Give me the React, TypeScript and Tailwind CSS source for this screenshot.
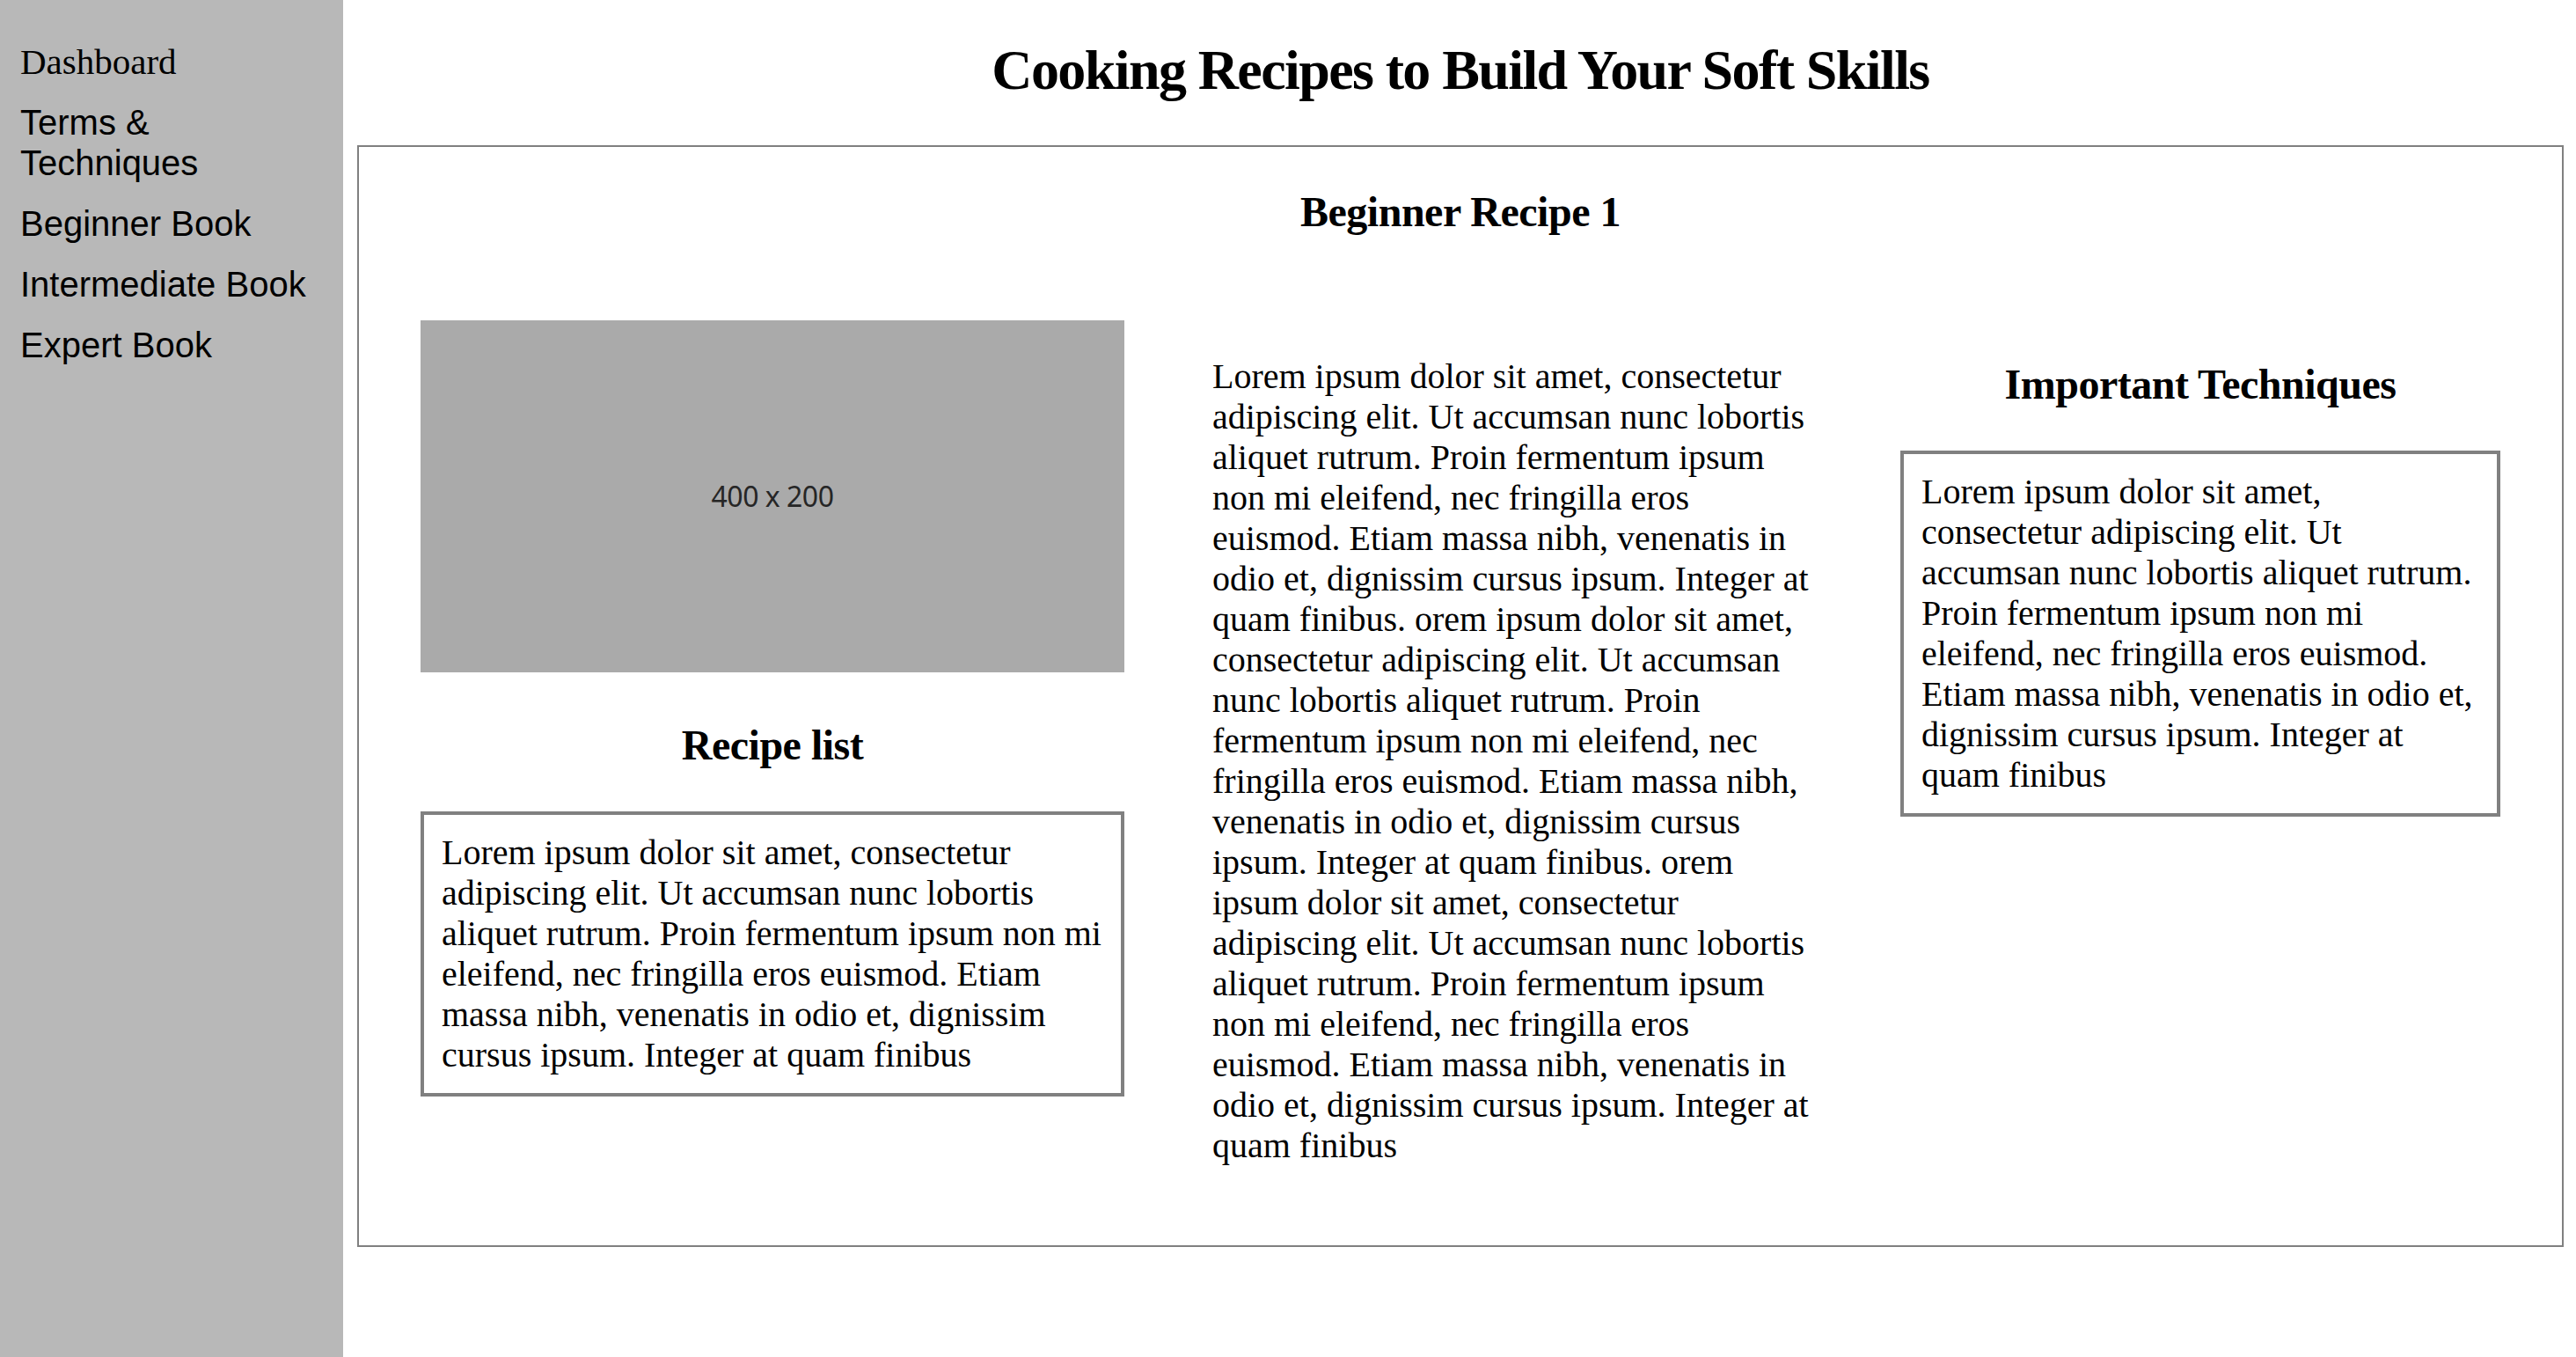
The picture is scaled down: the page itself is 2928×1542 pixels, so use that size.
import React from "react";

const LOREM =
  "Lorem ipsum dolor sit amet, consectetur adipiscing elit. Ut accumsan nunc lobortis aliquet rutrum. Proin fermentum ipsum non mi eleifend, nec fringilla eros euismod. Etiam massa nibh, venenatis in odio et, dignissim cursus ipsum. Integer at quam finibus";

const MIDDLE =
  "Lorem ipsum dolor sit amet, consectetur adipiscing elit. Ut accumsan nunc lobortis aliquet rutrum. Proin fermentum ipsum non mi eleifend, nec fringilla eros euismod. Etiam massa nibh, venenatis in odio et, dignissim cursus ipsum. Integer at quam finibus. orem ipsum dolor sit amet, consectetur adipiscing elit. Ut accumsan nunc lobortis aliquet rutrum. Proin fermentum ipsum non mi eleifend, nec fringilla eros euismod. Etiam massa nibh, venenatis in odio et, dignissim cursus ipsum. Integer at quam finibus. orem ipsum dolor sit amet, consectetur adipiscing elit. Ut accumsan nunc lobortis aliquet rutrum. Proin fermentum ipsum non mi eleifend, nec fringilla eros euismod. Etiam massa nibh, venenatis in odio et, dignissim cursus ipsum. Integer at quam finibus";

export default function App() {
  return (
    <div className="flex min-h-[1542px] w-full bg-white text-black font-['Liberation_Serif','Times_New_Roman',serif]">
      <nav className="w-[390px] shrink-0 bg-[#b8b8b8] px-[23px] pt-[47px] flex flex-col gap-[23px] text-[40px] leading-[46px]">
        <a className="font-['Liberation_Serif','Times_New_Roman',serif] text-[41px]">Dashboard</a>
        <a className="font-['Liberation_Sans',Arial,sans-serif]">Terms &amp; Techniques</a>
        <a className="font-['Liberation_Sans',Arial,sans-serif]">Beginner Book</a>
        <a className="font-['Liberation_Sans',Arial,sans-serif]">Intermediate Book</a>
        <a className="font-['Liberation_Sans',Arial,sans-serif]">Expert Book</a>
      </nav>

      <main className="flex-1 pl-[16px] pr-[14px]">
        <h1 className="mt-[43px] text-center text-[64px] leading-[74px] font-bold tracking-[-1.6px]">
          Cooking Recipes to Build Your Soft Skills
        </h1>

        <section className="mt-[48px] border-2 border-[#808080]">
          <h2 className="mt-[46px] text-center text-[48px] leading-[55px] font-bold tracking-[-0.5px]">
            Beginner Recipe 1
          </h2>

          <div className="grid grid-cols-[800px_1fr_1fr] items-start gap-x-[100px] px-[70px] pb-[90px]">
            <div className="mt-[96px] flex flex-col">
              <div className="flex h-[400px] w-[800px] items-center justify-center bg-[#aaaaaa]">
                <span className="font-['Noto_Sans',sans-serif] text-[32px] font-normal tracking-[-0.5px] text-[#262626]">
                  400 x 200
                </span>
              </div>
              <h2 className="mt-[55px] text-center text-[48px] leading-[55px] font-bold tracking-[-0.5px]">
                Recipe list
              </h2>
              <div className="mt-[48px] border-4 border-[#808080] p-[20px] text-[40px] leading-[46px]">
                {LOREM}
              </div>
            </div>

            <p className="mt-[137px] text-[40px] leading-[46px]">{MIDDLE}</p>

            <div className="mt-[141px] flex flex-col">
              <h2 className="text-center text-[48px] leading-[55px] font-bold tracking-[-0.5px]">
                Important Techniques
              </h2>
              <div className="mt-[48px] border-4 border-[#808080] p-[20px] text-[40px] leading-[46px]">
                {LOREM}
              </div>
            </div>
          </div>
        </section>
      </main>
    </div>
  );
}
